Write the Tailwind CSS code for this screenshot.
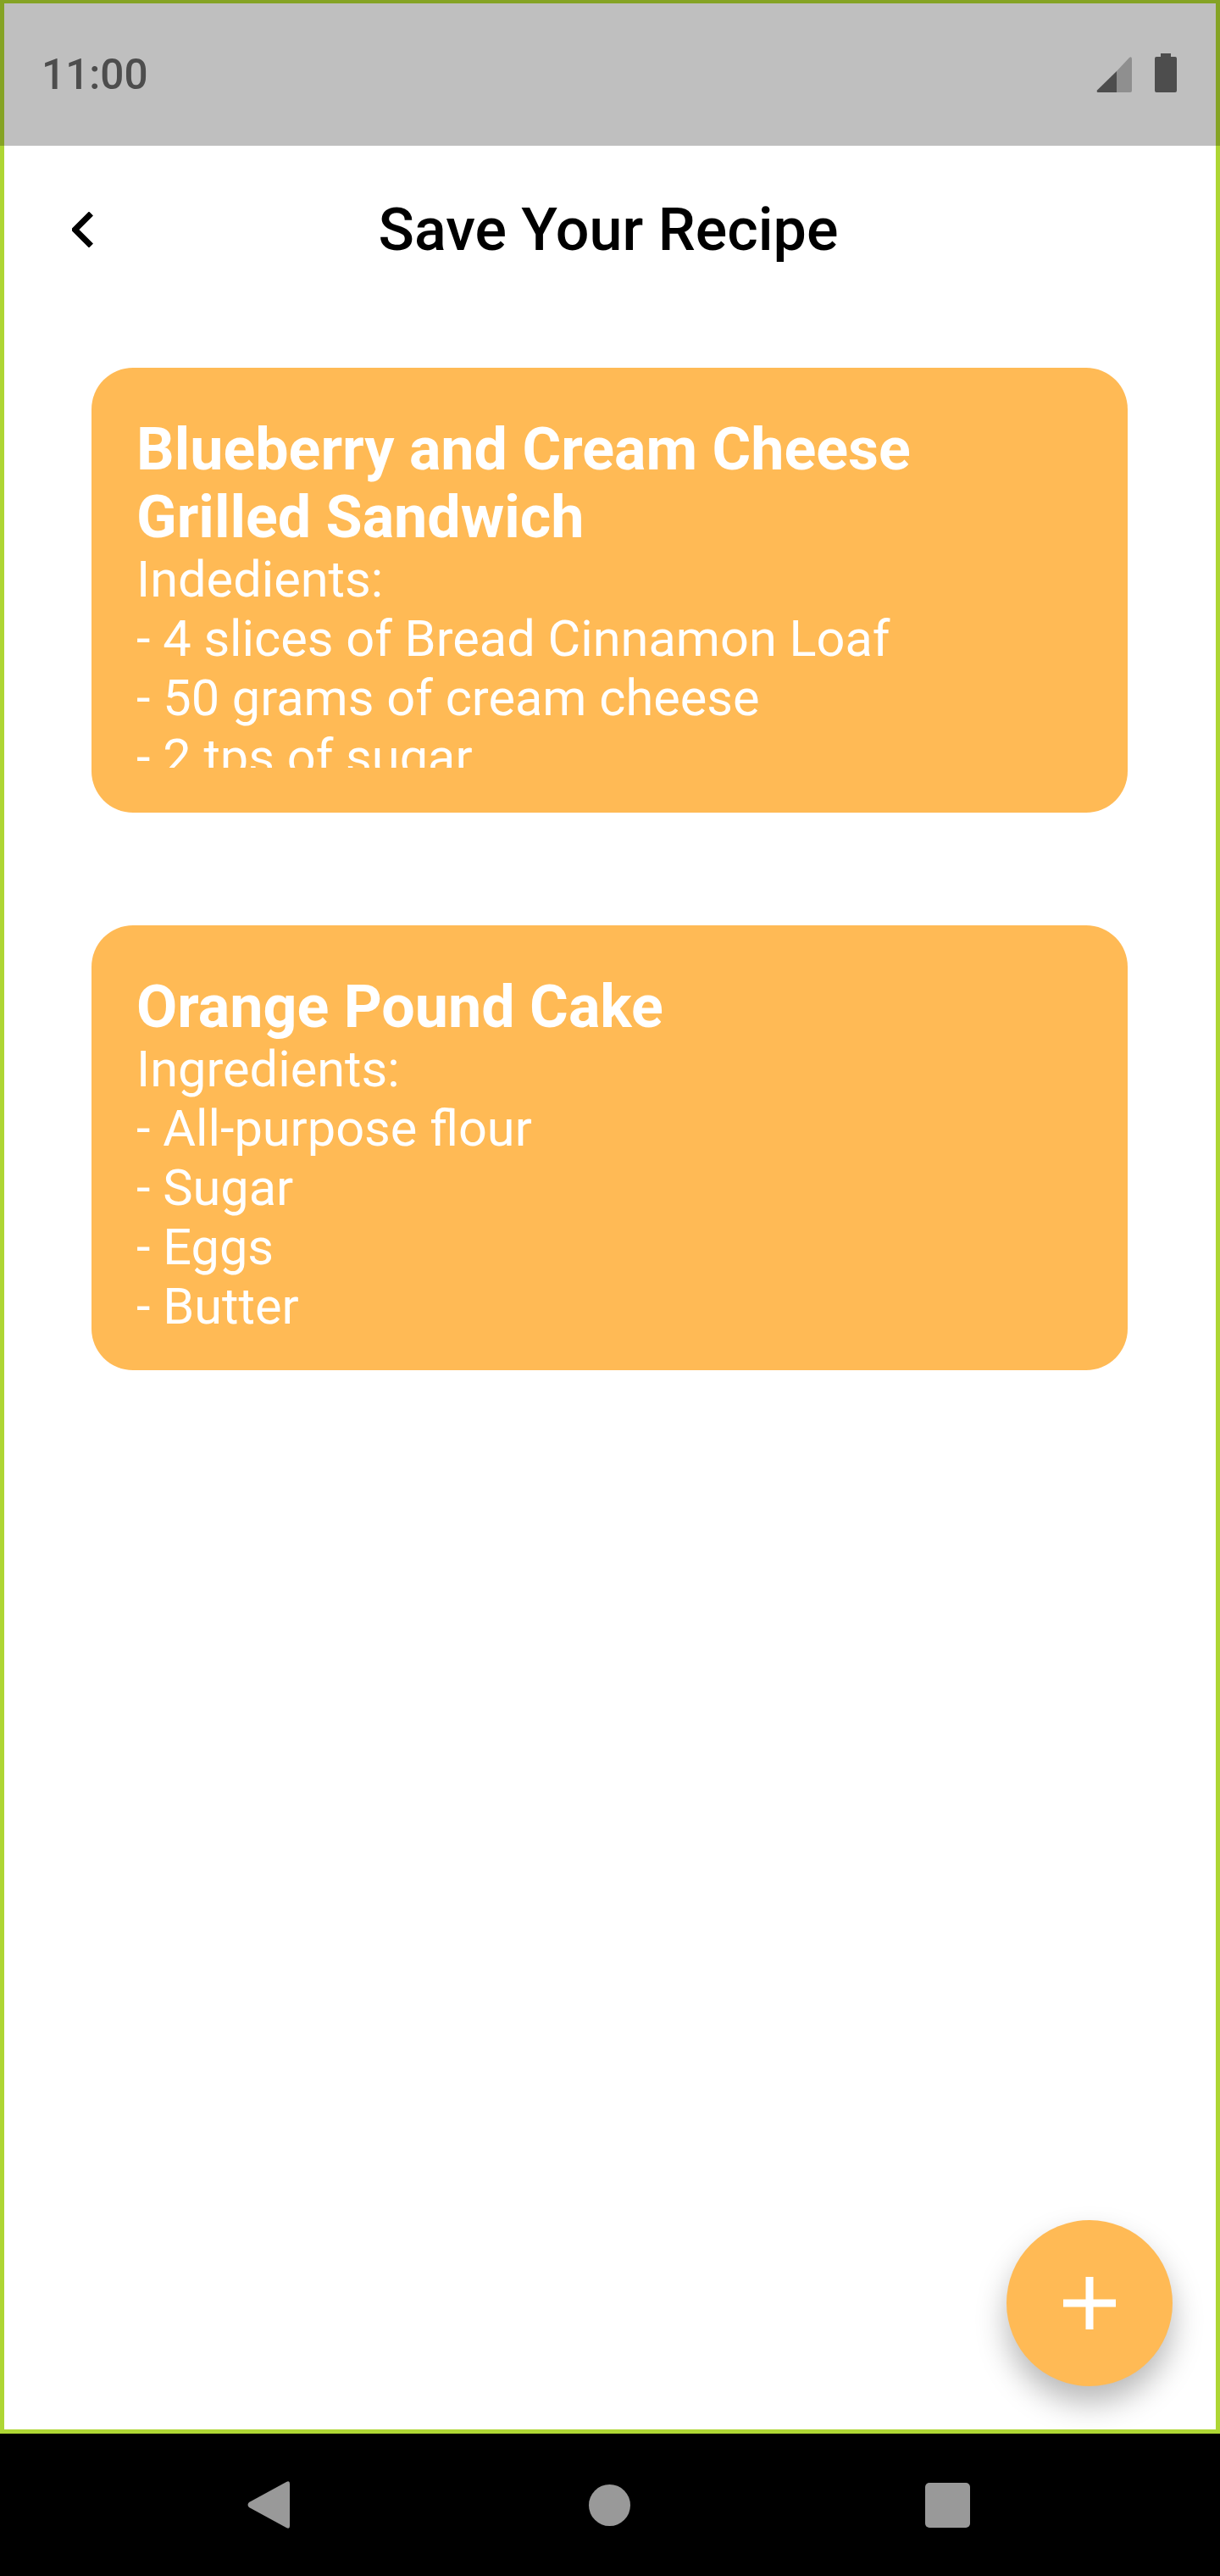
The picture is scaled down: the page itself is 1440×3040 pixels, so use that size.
<!DOCTYPE html>
<html lang="en">
<head>
  <meta charset="UTF-8">
  <title>Save Your Recipe</title>
  <script src="https://cdn.jsdelivr.net/npm/@tailwindcss/browser@4"></script>
</head>
<body class="bg-black font-['Roboto',sans-serif]">
  <div class="w-[1440px] h-[3040px] flex flex-col overflow-hidden">
    <!-- status bar -->
    <div class="h-[172px] shrink-0 bg-[#bfbfbf] border-x-[5px] border-t-[4px] border-[#85a324] flex items-center justify-between pl-[44px] pr-[46px]">
      <span class="text-[49.5px] leading-[56px] font-medium text-[#4d4d4d]">11:00</span>
      <div class="flex items-end gap-[27px] -mt-[4px]">
        <svg width="42" height="42" viewBox="0 0 42 42">
          <path d="M24 17 L1 39.5 Q0 42 2 42 L24 42 Z" fill="#4d4d4d"/>
          <path d="M24 17 L39 1 Q42 -1 42 3 L42 40 Q42 42 40 42 L24 42 Z" fill="#8f8f8f"/>
        </svg>
        <svg width="26" height="46" viewBox="0 0 26 46">
          <path d="M7 0 H19 V4 H24 Q26 4 26 6 V44 Q26 46 24 46 H2 Q0 46 0 44 V6 Q0 4 2 4 H7 Z" fill="#4d4d4d"/>
        </svg>
      </div>
    </div>

    <!-- screen -->
    <div class="relative h-[2700px] shrink-0 bg-white border-x-[5px] border-b-[5px] border-[#aed634]">
      <header class="grid grid-cols-[1fr_auto_1fr] items-center h-[198px]">
        <svg class="ml-[80px]" width="25" height="42" viewBox="0 0 25 42">
          <path d="M22.5 2 L3.5 21 L22.5 40" fill="none" stroke="#000" stroke-width="7"/>
        </svg>
        <h1 class="text-[70px] leading-[82px] font-medium text-black -ml-[2px] mr-[2px]">Save Your Recipe</h1>
        <div></div>
      </header>

      <div class="flex flex-col gap-[133px] mt-[64px] ml-[103px] w-[1223px]">
        <div class="h-[525px] rounded-[49px] bg-[#ffba55] py-[56px] px-[53px] text-white">
          <div class="h-[416px] overflow-hidden">
            <h2 class="text-[70px] leading-[80px] font-bold">Blueberry and Cream Cheese<br>Grilled Sandwich</h2>
            <p class="text-[59.5px] leading-[70px] -mt-[1px]">Indedients:</p>
            <p class="text-[59.5px] leading-[70px]">- 4 slices of Bread Cinnamon Loaf</p>
            <p class="text-[59.5px] leading-[70px]">- 50 grams of cream cheese</p>
            <p class="text-[59.5px] leading-[70px]">- 2 tps of sugar</p>
          </div>
        </div>
        <div class="h-[525px] rounded-[49px] bg-[#ffba55] py-[56px] px-[53px] text-white">
          <h2 class="text-[70px] leading-[80px] font-bold">Orange Pound Cake</h2>
          <p class="text-[59.5px] leading-[70px] -mt-[1px]">Ingredients:</p>
          <p class="text-[59.5px] leading-[70px]">- All-purpose flour</p>
          <p class="text-[59.5px] leading-[70px]">- Sugar</p>
          <p class="text-[59.5px] leading-[70px]">- Eggs</p>
          <p class="text-[59.5px] leading-[70px]">- Butter</p>
        </div>
      </div>

      <!-- add button -->
      <button class="absolute left-[1183px] top-[2448px] w-[196px] h-[196px] rounded-full bg-[#ffba55] flex items-center justify-center shadow-[0_20px_36px_rgba(0,0,0,0.28)]">
        <svg width="62" height="62" viewBox="0 0 62 62">
          <path d="M26.5 0 H35.5 V26.5 H62 V35.5 H35.5 V62 H26.5 V35.5 H0 V26.5 H26.5 Z" fill="#fff"/>
        </svg>
      </button>
    </div>

    <!-- nav bar -->
    <div class="flex-1 bg-black flex items-center pl-[292px]">
      <svg width="50" height="56" viewBox="0 0 50 56">
        <path d="M46 1 Q50 -1 50 3 V53 Q50 57 46 55 L2 31 Q-1 28 2 25 Z" fill="#999"/>
      </svg>
      <div class="ml-[353px] w-[49px] h-[49px] rounded-full bg-[#999]"></div>
      <div class="ml-[348px] w-[53px] h-[53px] rounded-[5px] bg-[#999]"></div>
    </div>
  </div>
</body>
</html>
